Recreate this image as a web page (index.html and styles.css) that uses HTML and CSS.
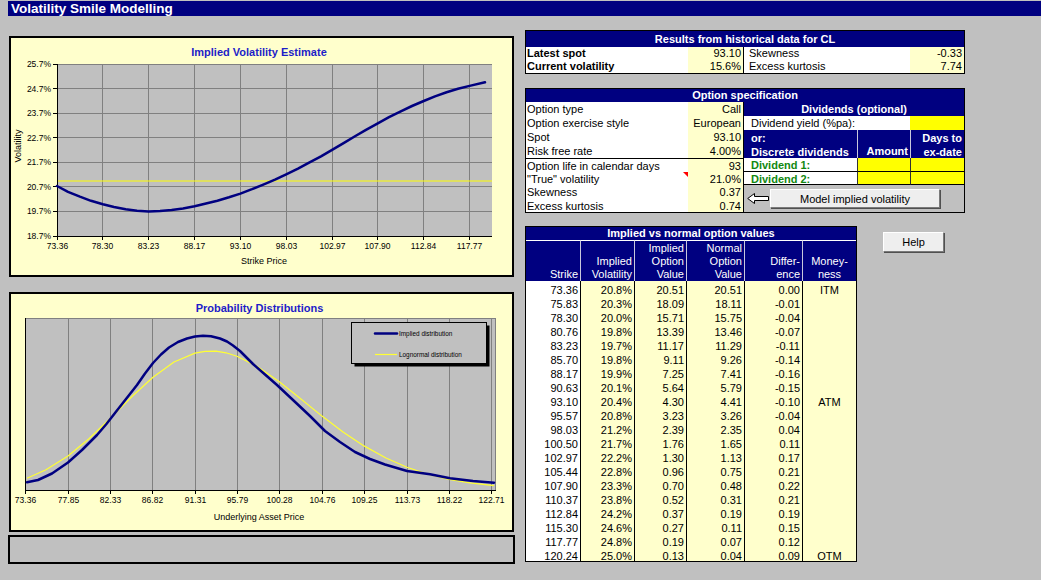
FILE: index.html
```html
<!DOCTYPE html>
<html lang="en">
<head>
<meta charset="utf-8">
<title>Volatility Smile Modelling</title>
<link rel="stylesheet" href="styles.css">
</head>
<body>
<div class="titlebar">Volatility Smile Modelling</div>
<div class="main">
  <div class="left">
    <div class="chart chart-iv">
      <svg class="plot" width="501" height="237" viewBox="11 38 501 237">
        <text class="ct" x="259" y="56" text-anchor="middle">Implied Volatility Estimate</text>
        <rect x="57" y="64" width="435" height="172" class="pa"/>
        <path class="grid" d="M57 64.5H492M57 88.5H492M57 113.5H492M57 137.5H492M57 162.5H492M57 186.5H492M57 211.5H492M102.5 64V236M148.5 64V236M194.5 64V236M240.5 64V236M286.5 64V236M332.5 64V236M377.5 64V236M423.5 64V236M469.5 64V236"/>
        <path class="trueline" d="M57 181H492"/>
        <path class="axis" d="M57.5 64V236.5M57 236.5H492M53 64.5H57M53 88.5H57M53 113.5H57M53 137.5H57M53 162.5H57M53 186.5H57M53 211.5H57M53 236.5H57M57.5 236.5V240M102.5 236.5V240M148.5 236.5V240M194.5 236.5V240M240.5 236.5V240M286.5 236.5V240M332.5 236.5V240M377.5 236.5V240M423.5 236.5V240M469.5 236.5V240"/>
        <polyline class="navy-line" points="57,186 68,191.8 79.9,196.7 91,200.8 102.9,204.3 114,207 125.7,209.3 137,210.8 148.7,211.4 160,211.1 171.6,210 183,208.4 194.6,206.3 206,203.5 217.4,200.7 229,197.3 240.4,193.6 252,189.2 263.3,184.6 275,179.7 286.2,174.4 298,168.6 309.1,162.6 321,156.3 332.1,149.8 344,142.8 355,136.2 366,129.8 377.8,123.3 389,117.2 400.8,111.4 412,106 423.7,101 435,96.4 446.6,92.2 458,88.8 469.6,85.9 485,82.3"/>
        <g class="ax" text-anchor="end">
          <text x="51" y="67">25.7%</text>
          <text x="51" y="91.6">24.7%</text>
          <text x="51" y="116.1">23.7%</text>
          <text x="51" y="140.7">22.7%</text>
          <text x="51" y="165.3">21.7%</text>
          <text x="51" y="189.9">20.7%</text>
          <text x="51" y="214.4">19.7%</text>
          <text x="51" y="239">18.7%</text>
        </g>
        <g class="ax" text-anchor="middle">
          <text x="57.5" y="249">73.36</text>
          <text x="102.5" y="249">78.30</text>
          <text x="148.5" y="249">83.23</text>
          <text x="194.5" y="249">88.17</text>
          <text x="240.5" y="249">93.10</text>
          <text x="286.5" y="249">98.03</text>
          <text x="332.5" y="249">102.97</text>
          <text x="377.5" y="249">107.90</text>
          <text x="423.5" y="249">112.84</text>
          <text x="469.5" y="249">117.77</text>
        </g>
        <text class="at" x="264" y="264" text-anchor="middle">Strike Price</text>
        <text class="at" x="21" y="146" text-anchor="middle" transform="rotate(-90 21 146)">Volatility</text>
      </svg>
    </div>
    <div class="chart chart-pd">
      <svg class="plot" width="501" height="236" viewBox="11 294 501 236">
        <text class="ct" x="259.5" y="311.5" text-anchor="middle">Probability Distributions</text>
        <rect x="25" y="318" width="471" height="172" class="pa"/>
        <path class="grid" d="M25 318.5H496M495.5 318V490M68.5 318V490M110.5 318V490M152.5 318V490M195.5 318V490M237.5 318V490M279.5 318V490M322.5 318V490M364.5 318V490M407.5 318V490M449.5 318V490M491.5 318V490"/>
        <path class="axis" d="M25.5 318V490.5M25 490.5H496M25.5 490.5V494M68.5 490.5V494M110.5 490.5V494M152.5 490.5V494M195.5 490.5V494M237.5 490.5V494M279.5 490.5V494M322.5 490.5V494M364.5 490.5V494M407.5 490.5V494M449.5 490.5V494M491.5 490.5V494"/>
        <polyline class="yellow-line" points="27,478.2 46,469.8 68,456 89,438.7 110,418.5 132,396.5 153,377.2 174,362 195,353.1 205,351.3 216,351.2 226,352.8 237,356.2 258,366.9 279,381.5 300,398.2 322,416.1 343,431.9 364,445.9 386,458 407,467.2 428,474.2 449,479.3 470,482.9 494,485.7"/>
        <polyline class="navy-line" points="27,482.3 38,480 52,473.5 68,462.5 82,450 97,435 106,424.5 115,413 126,399 137,385 145,373.5 153,363 161,354.5 169,347.5 178,342 187,338.5 195,336.5 203,335.7 211,336.3 220,338.5 227,341.5 233,345.5 240,351 246,357 253,364 265,374.5 277,385 293,400 310,416 325,431 340,442 355,452 370,459 385,464.5 407,471 430,474.3 450,478.3 473,481 494,482.7"/>
        <g class="ax" text-anchor="middle">
          <text x="25.5" y="503">73.36</text>
          <text x="68.5" y="503">77.85</text>
          <text x="110.5" y="503">82.33</text>
          <text x="152.5" y="503">86.82</text>
          <text x="195.5" y="503">91.31</text>
          <text x="237.5" y="503">95.79</text>
          <text x="279.5" y="503">100.28</text>
          <text x="322.5" y="503">104.76</text>
          <text x="364.5" y="503">109.25</text>
          <text x="407.5" y="503">113.73</text>
          <text x="449.5" y="503">118.22</text>
          <text x="491.5" y="503">122.71</text>
        </g>
        <text class="at" x="259" y="520" text-anchor="middle">Underlying Asset Price</text>
        <rect x="354.5" y="325.5" width="135" height="41" class="legend-shadow"/>
        <rect x="351.5" y="322.5" width="135" height="41" class="legend"/>
        <path class="navy-line" d="M375 333.5H397"/>
        <path class="yellow-line" d="M375 354.5H397"/>
        <text class="lg" x="399" y="336">Implied distribution</text>
        <text class="lg" x="399" y="357">Lognormal distribution</text>
      </svg>
    </div>
    <div class="status"></div>
  </div>

  <div class="right">
    <div class="sheet results">
      <div class="hdr span-all">Results from historical data for CL</div>
      <div class="c b">Latest spot</div>
      <div class="c num br">93.10</div>
      <div class="c ind">Skewness</div>
      <div class="c num">-0.33</div>
      <div class="c b">Current volatility</div>
      <div class="c num br">15.6%</div>
      <div class="c ind">Excess kurtosis</div>
      <div class="c num">7.74</div>
    </div>

    <div class="sheet spec">
      <div class="hdr span-all">Option specification</div>

      <div class="c">Option type</div>
      <div class="c num br">Call</div>
      <div class="navy bold center span-3">Dividends (optional)</div>

      <div class="c">Option exercise style</div>
      <div class="c num br">European</div>
      <div class="c ind2 span-2">Dividend yield (%pa):</div>
      <div class="yel"></div>

      <div class="c">Spot</div>
      <div class="c num br">93.10</div>
      <div class="navy bold ind2 rows-2">or:<br>Discrete dividends</div>
      <div class="navy bold rows-2 bottom-right sep">Amount</div>
      <div class="navy bold rows-2 right-text sep">Days to<br>ex-date</div>

      <div class="c">Risk free rate</div>
      <div class="c num br">4.00%</div>

      <div class="c bt">Option life in calendar days</div>
      <div class="c num br bt">93</div>
      <div class="c ind2 div-label bb">Dividend 1:</div>
      <div class="yel bl bb"></div>
      <div class="yel bl bb"></div>

      <div class="c note">"True" volatility<span class="comment-mark"></span></div>
      <div class="c num br">21.0%</div>
      <div class="c ind2 div-label bb">Dividend 2:</div>
      <div class="yel bl bb"></div>
      <div class="yel bl bb"></div>

      <div class="c">Skewness</div>
      <div class="c num br">0.37</div>
      <div class="action span-3 rows-2">
        <svg class="arrow" width="22" height="11" viewBox="0 0 22 11"><polygon points="0.7,5.5 7.5,0.5 7.5,3.5 21.5,3.5 21.5,7.5 7.5,7.5 7.5,10.5"/></svg>
        <button class="btn model">Model implied volatility</button>
      </div>

      <div class="c">Excess kurtosis</div>
      <div class="c num br">0.74</div>
    </div>

    <div class="lower">
      <div class="sheet implied">
        <div class="hdr span-all">Implied vs normal option values</div>
        <div class="ch first">Strike</div>
        <div class="ch">Implied<br>Volatility</div>
        <div class="ch">Implied<br>Option<br>Value</div>
        <div class="ch">Normal<br>Option<br>Value</div>
        <div class="ch">Differ-<br>ence</div>
        <div class="ch mid">Money-<br>ness</div>

        <div class="d k">73.36</div><div class="d">20.8%</div><div class="d">20.51</div><div class="d">20.51</div><div class="d">0.00</div><div class="d m">ITM</div>
        <div class="d k">75.83</div><div class="d">20.3%</div><div class="d">18.09</div><div class="d">18.11</div><div class="d">-0.01</div><div class="d m"></div>
        <div class="d k">78.30</div><div class="d">20.0%</div><div class="d">15.71</div><div class="d">15.75</div><div class="d">-0.04</div><div class="d m"></div>
        <div class="d k">80.76</div><div class="d">19.8%</div><div class="d">13.39</div><div class="d">13.46</div><div class="d">-0.07</div><div class="d m"></div>
        <div class="d k">83.23</div><div class="d">19.7%</div><div class="d">11.17</div><div class="d">11.29</div><div class="d">-0.11</div><div class="d m"></div>
        <div class="d k">85.70</div><div class="d">19.8%</div><div class="d">9.11</div><div class="d">9.26</div><div class="d">-0.14</div><div class="d m"></div>
        <div class="d k">88.17</div><div class="d">19.9%</div><div class="d">7.25</div><div class="d">7.41</div><div class="d">-0.16</div><div class="d m"></div>
        <div class="d k">90.63</div><div class="d">20.1%</div><div class="d">5.64</div><div class="d">5.79</div><div class="d">-0.15</div><div class="d m"></div>
        <div class="d k">93.10</div><div class="d">20.4%</div><div class="d">4.30</div><div class="d">4.41</div><div class="d">-0.10</div><div class="d m">ATM</div>
        <div class="d k">95.57</div><div class="d">20.8%</div><div class="d">3.23</div><div class="d">3.26</div><div class="d">-0.04</div><div class="d m"></div>
        <div class="d k">98.03</div><div class="d">21.2%</div><div class="d">2.39</div><div class="d">2.35</div><div class="d">0.04</div><div class="d m"></div>
        <div class="d k">100.50</div><div class="d">21.7%</div><div class="d">1.76</div><div class="d">1.65</div><div class="d">0.11</div><div class="d m"></div>
        <div class="d k">102.97</div><div class="d">22.2%</div><div class="d">1.30</div><div class="d">1.13</div><div class="d">0.17</div><div class="d m"></div>
        <div class="d k">105.44</div><div class="d">22.8%</div><div class="d">0.96</div><div class="d">0.75</div><div class="d">0.21</div><div class="d m"></div>
        <div class="d k">107.90</div><div class="d">23.3%</div><div class="d">0.70</div><div class="d">0.48</div><div class="d">0.22</div><div class="d m"></div>
        <div class="d k">110.37</div><div class="d">23.8%</div><div class="d">0.52</div><div class="d">0.31</div><div class="d">0.21</div><div class="d m"></div>
        <div class="d k">112.84</div><div class="d">24.2%</div><div class="d">0.37</div><div class="d">0.19</div><div class="d">0.19</div><div class="d m"></div>
        <div class="d k">115.30</div><div class="d">24.6%</div><div class="d">0.27</div><div class="d">0.11</div><div class="d">0.15</div><div class="d m"></div>
        <div class="d k">117.77</div><div class="d">24.8%</div><div class="d">0.19</div><div class="d">0.07</div><div class="d">0.12</div><div class="d m"></div>
        <div class="d k">120.24</div><div class="d">25.0%</div><div class="d">0.13</div><div class="d">0.04</div><div class="d">0.09</div><div class="d m">OTM</div>
      </div>
      <button class="btn help">Help</button>
    </div>
  </div>
</div>
</body>
</html>
```

FILE: styles.css
```css
* { box-sizing: border-box; }

html, body {
  margin: 0;
  padding: 0;
}

body {
  width: 1041px;
  height: 580px;
  overflow: hidden;
  background: #c0c0c0;
  font-family: "Liberation Sans", Arial, sans-serif;
  font-size: 11px;
  color: #000;
}

.titlebar {
  margin: 1px 0 0 8px;
  height: 15px;
  padding-left: 3px;
  background: #000080;
  color: #fff;
  font-weight: bold;
  font-size: 13.5px;
  line-height: 15px;
  white-space: nowrap;
}

.main {
  display: flex;
  align-items: flex-start;
}

/* ---------- left column: charts ---------- */
.left {
  width: 515px;
  padding-left: 8px;
  display: flex;
  flex-direction: column;
}

.chart {
  width: 505px;
  margin-left: 1px;
  border: 2px solid #000;
  background: #ffffcc;
}

.chart-iv { margin-top: 20px; height: 241px; }
.chart-pd { margin-top: 15px; height: 240px; }

.plot { display: block; }

.pa { fill: #c0c0c0; }
.grid { stroke: #808080; stroke-width: 1; fill: none; }
.axis { stroke: #000; stroke-width: 1; fill: none; }
.trueline { stroke: #ffff00; stroke-width: 1; fill: none; }
.navy-line { stroke: #000080; stroke-width: 2.5; fill: none; stroke-linejoin: round; stroke-linecap: round; }
.yellow-line { stroke: #ffff33; stroke-width: 1.2; fill: none; stroke-linejoin: round; }

.ct {
  font-family: "Liberation Sans", Arial, sans-serif;
  font-size: 11px;
  font-weight: bold;
  fill: #1d1dc8;
}
.ax {
  font-family: "Liberation Sans", Arial, sans-serif;
  font-size: 8.5px;
  fill: #000;
}
.at {
  font-family: "Liberation Sans", Arial, sans-serif;
  font-size: 9px;
  fill: #000;
}
.lg {
  font-family: "Liberation Sans", Arial, sans-serif;
  font-size: 6.4px;
  fill: #000;
}
.legend { fill: #c0c0c0; stroke: #000; stroke-width: 1; }
.legend-shadow { fill: #000; }

.status {
  margin-top: 3px;
  width: 507px;
  height: 29px;
  border: 2px solid #000;
  background: #c0c0c0;
}

/* ---------- right column: sheets ---------- */
.right {
  margin-left: 10px;
  padding-top: 14px;
  width: 440px;
  display: flex;
  flex-direction: column;
}

.sheet {
  display: grid;
  border: 1px solid #000;
  background: #fff;
}

.results {
  grid-template-columns: 162px 56px 166px 54px;
  grid-template-rows: 16px 13px 13px;
}

.spec {
  margin-top: 14px;
  grid-template-columns: 162px 56px 113px 53px 54px;
  grid-template-rows: 13px 14px 14px 14px 14px 14px 13px 14px 13px;
}

.hdr {
  background: #000080;
  color: #fff;
  font-weight: bold;
  text-align: center;
  line-height: 13px;
  white-space: nowrap;
}
.results .hdr { line-height: 16px; }

.span-all { grid-column: 1 / -1; }
.span-2 { grid-column: span 2; }
.span-3 { grid-column: span 3; }
.rows-2 { grid-row: span 2; }

.c {
  padding: 0 2px 0 1px;
  line-height: 13px;
  white-space: nowrap;
  overflow: hidden;
}
.spec .c { padding-top: 1px; }

.b { font-weight: bold; }
.bold { font-weight: bold; }
.center { text-align: center; }

.num {
  text-align: right;
  background: #ffffcc;
}
.br { border-right: 1px solid #000; }
.bt { border-top: 1px solid #000; }
.bb { border-bottom: 1px solid #000; }
.bl { border-left: 1px solid #333; }

.ind { padding-left: 5px; }
.ind2 { padding-left: 7px; }

.navy {
  background: #000080;
  color: #fff;
  line-height: 14px;
  white-space: nowrap;
}
.navy.ind2 { padding-top: 1px; }
.sep { border-left: 1px solid #c8c8dc; }
.bottom-right {
  display: flex;
  align-items: flex-end;
  justify-content: flex-end;
  padding-right: 2px;
}
.right-text {
  text-align: right;
  padding: 1px 2px 0 0;
}

.yel { background: #ffff00; }

.div-label {
  color: #118811;
  font-weight: bold;
}

.note { position: relative; }
.comment-mark {
  position: absolute;
  top: 0;
  right: 0;
  width: 0;
  height: 0;
  border-top: 5px solid #ff0000;
  border-left: 5px solid transparent;
}

.action {
  background: #c0c0c0;
  display: flex;
  align-items: center;
  padding-left: 3px;
}

.arrow { display: block; flex: none; }
.arrow polygon { fill: #fff; stroke: #000; stroke-width: 1; }

.btn {
  font-family: "Liberation Sans", Arial, sans-serif;
  font-size: 11px;
  color: #000;
  background: #eeeeee;
  border: 1px solid;
  border-color: #ffffff #7a7a7a #7a7a7a #ffffff;
  box-shadow: 1px 1px 0 #505050;
  padding: 0;
  margin: 0;
}

.model {
  margin-left: 1px;
  width: 170px;
  height: 19px;
}

.lower {
  margin-top: 13px;
  display: flex;
  align-items: flex-start;
}

.help {
  margin: 6px 0 0 26px;
  width: 61px;
  height: 20px;
}

.implied {
  grid-template-columns: 54px 54px 52px 58px 58px 54px;
  grid-template-rows: 13px 41px repeat(20, 14px);
  background: #ffffcc;
}

.ch {
  background: #000080;
  color: #fff;
  border-top: 1px solid #fff;
  border-left: 1px solid #c8c8dc;
  display: flex;
  align-items: flex-end;
  justify-content: flex-end;
  text-align: right;
  line-height: 13px;
  padding-right: 2px;
  white-space: nowrap;
}
.ch.first { border-left: none; }
.ch.mid { justify-content: center; text-align: center; padding-right: 0; }

.d {
  border-left: 1px solid #000;
  text-align: right;
  padding: 2px 2px 0 0;
  line-height: 14px;
  white-space: nowrap;
}
.d.k { border-left: none; background: #fff; }
.d.m { text-align: center; padding-right: 0; }
```
